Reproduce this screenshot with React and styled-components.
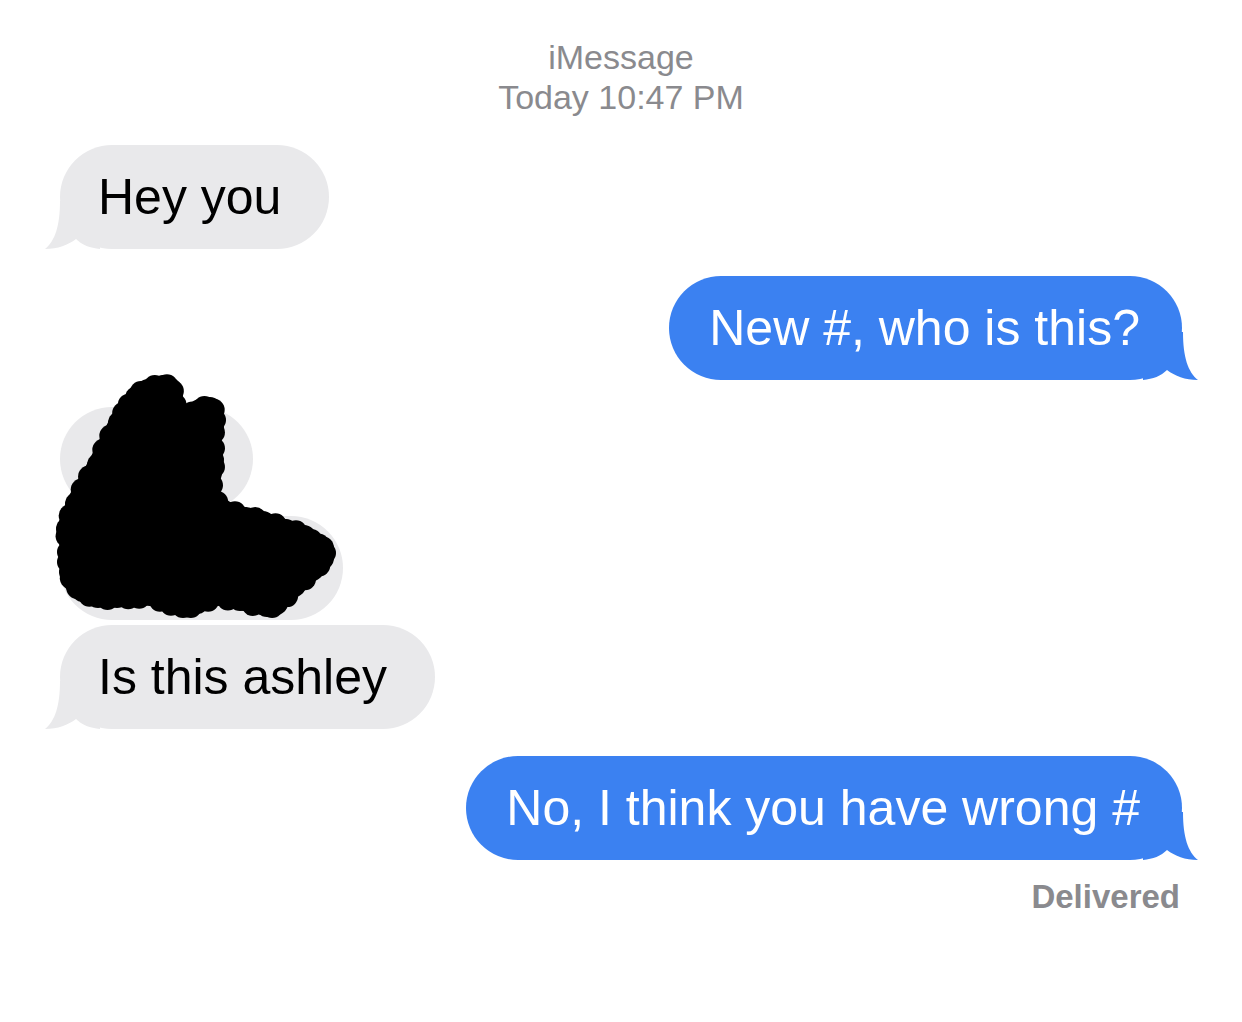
import React from "react";
import styled, { createGlobalStyle, css } from "styled-components";

const GlobalStyle = createGlobalStyle`
  html, body {
    margin: 0;
    padding: 0;
    background: #ffffff;
  }
  body {
    font-family: "Liberation Sans", Arial, sans-serif;
    -webkit-font-smoothing: antialiased;
  }
`;

const Screen = styled.main`
  width: 1242px;
  min-height: 1022px;
  box-sizing: border-box;
  padding: 37px 60px 0;
  display: flex;
  flex-direction: column;
  background: #ffffff;
`;

const Header = styled.header`
  display: flex;
  flex-direction: column;
  align-items: center;
  color: #8a8a8e;
  font-size: 34px;
  line-height: 40px;
  margin-bottom: 28px;
`;

const Group = styled.div`
  position: relative;
  display: flex;
  flex-direction: column;
  gap: ${(p) => p.$gap || 4}px;
  align-items: ${(p) => (p.$mine ? "flex-end" : "flex-start")};
  margin-bottom: 27px;
`;

const Bubble = styled.div`
  position: relative;
  box-sizing: border-box;
  height: 104px;
  display: flex;
  align-items: center;
  border-radius: 52px;
  font-size: 50px;
  line-height: 58px;
  white-space: nowrap;
  ${(p) =>
    p.$mine
      ? css`
          background: #3b81f1;
          color: #ffffff;
          padding: 0 42px 0 40px;
        `
      : css`
          background: #e9e9eb;
          color: #000000;
          padding: 0 48px 0 38px;
        `}
  ${(p) =>
    p.$width &&
    css`
      width: ${p.$width}px;
    `}
`;

const TailSvg = styled.svg`
  position: absolute;
  bottom: 0;
  width: 60px;
  height: 50px;
  ${(p) =>
    p.$mine
      ? css`
          right: -17px;
          transform: scaleX(-1);
        `
      : css`
          left: -16px;
        `}
`;

const Tail = ({ mine }) => (
  <TailSvg $mine={mine} viewBox="0 0 60 50" aria-hidden="true">
    <path
      d="M16,2 C16,27 11,42 1,50 C14,50 24,46 32,40 C38,46 46,49 56,50 L56,2 Z"
      fill={mine ? "#3b81f1" : "#e9e9eb"}
    />
  </TailSvg>
);

const Message = ({ mine, tail, width, children }) => (
  <Bubble $mine={mine} $width={width}>
    {tail && <Tail mine={mine} />}
    <span>{children}</span>
  </Bubble>
);

const Scribble = styled.svg`
  position: absolute;
  left: -10px;
  top: -40px;
  width: 300px;
  height: 270px;
  z-index: 2;
  pointer-events: none;
`;

const scribblePoints = [
  [113, 20], [98, 24], [87, 31], [70, 56], [49, 98], [27, 137], [18, 162],
  [21, 175], [21, 205], [26, 215], [33, 223], [48, 229], [67, 229], [100, 227],
  [133, 239], [147, 235], [167, 227], [190, 232], [217, 238], [226, 236],
  [244, 218], [262, 202], [272, 191], [272, 181], [264, 180], [254, 170],
  [236, 164], [213, 156], [196, 152], [172, 144], [158, 130], [160, 106],
  [162, 93], [160, 70], [162, 60], [162, 46], [160, 42], [150, 44], [138, 52],
  [124, 48], [121, 28], [119, 22],
];

const scallops = scribblePoints.flatMap(([x1, y1], i) => {
  const [x2, y2] = scribblePoints[(i + 1) % scribblePoints.length];
  const dx = x2 - x1;
  const dy = y2 - y1;
  const len = Math.hypot(dx, dy) || 1;
  const nx = -dy / len;
  const ny = dx / len;
  const steps = Math.max(1, Math.round(len / 20));
  const out = [];
  for (let s = 1; s < steps + 1; s++) {
    const t = s / (steps + 1);
    out.push([x1 + dx * t + nx * 3, y1 + dy * t + ny * 3]);
  }
  return out;
});

const Redaction = () => (
  <Scribble viewBox="0 0 300 270" aria-hidden="true">
    <polygon
      points={scribblePoints.map((p) => p.join(",")).join(" ")}
      fill="#000"
      stroke="#000"
      strokeWidth="22"
      strokeLinejoin="round"
    />
    {scribblePoints.map(([x, y], i) => (
      <circle key={`v${i}`} cx={x} cy={y} r="12" fill="#000" />
    ))}
    {scallops.map(([x, y], i) => (
      <circle key={`s${i}`} cx={x} cy={y} r="11" fill="#000" />
    ))}
  </Scribble>
);

const Status = styled.div`
  align-self: flex-end;
  margin-top: -10px;
  padding-right: 2px;
  color: #8a8a8e;
  font-size: 33px;
  line-height: 40px;
  font-weight: 700;
`;

export default function App() {
  return (
    <>
      <GlobalStyle />
      <Screen>
        <Header>
          <div>iMessage</div>
          <div>Today 10:47 PM</div>
        </Header>

        <Group>
          <Message tail>Hey you</Message>
        </Group>

        <Group $mine>
          <Message mine tail>New #, who is this?</Message>
        </Group>

        <Group $gap={5}>
          <Message width={193} />
          <Message width={283} />
          <Redaction />
          <Message tail>Is this ashley</Message>
        </Group>

        <Group $mine>
          <Message mine tail>No, I think you have wrong #</Message>
        </Group>

        <Status>Delivered</Status>
      </Screen>
    </>
  );
}
